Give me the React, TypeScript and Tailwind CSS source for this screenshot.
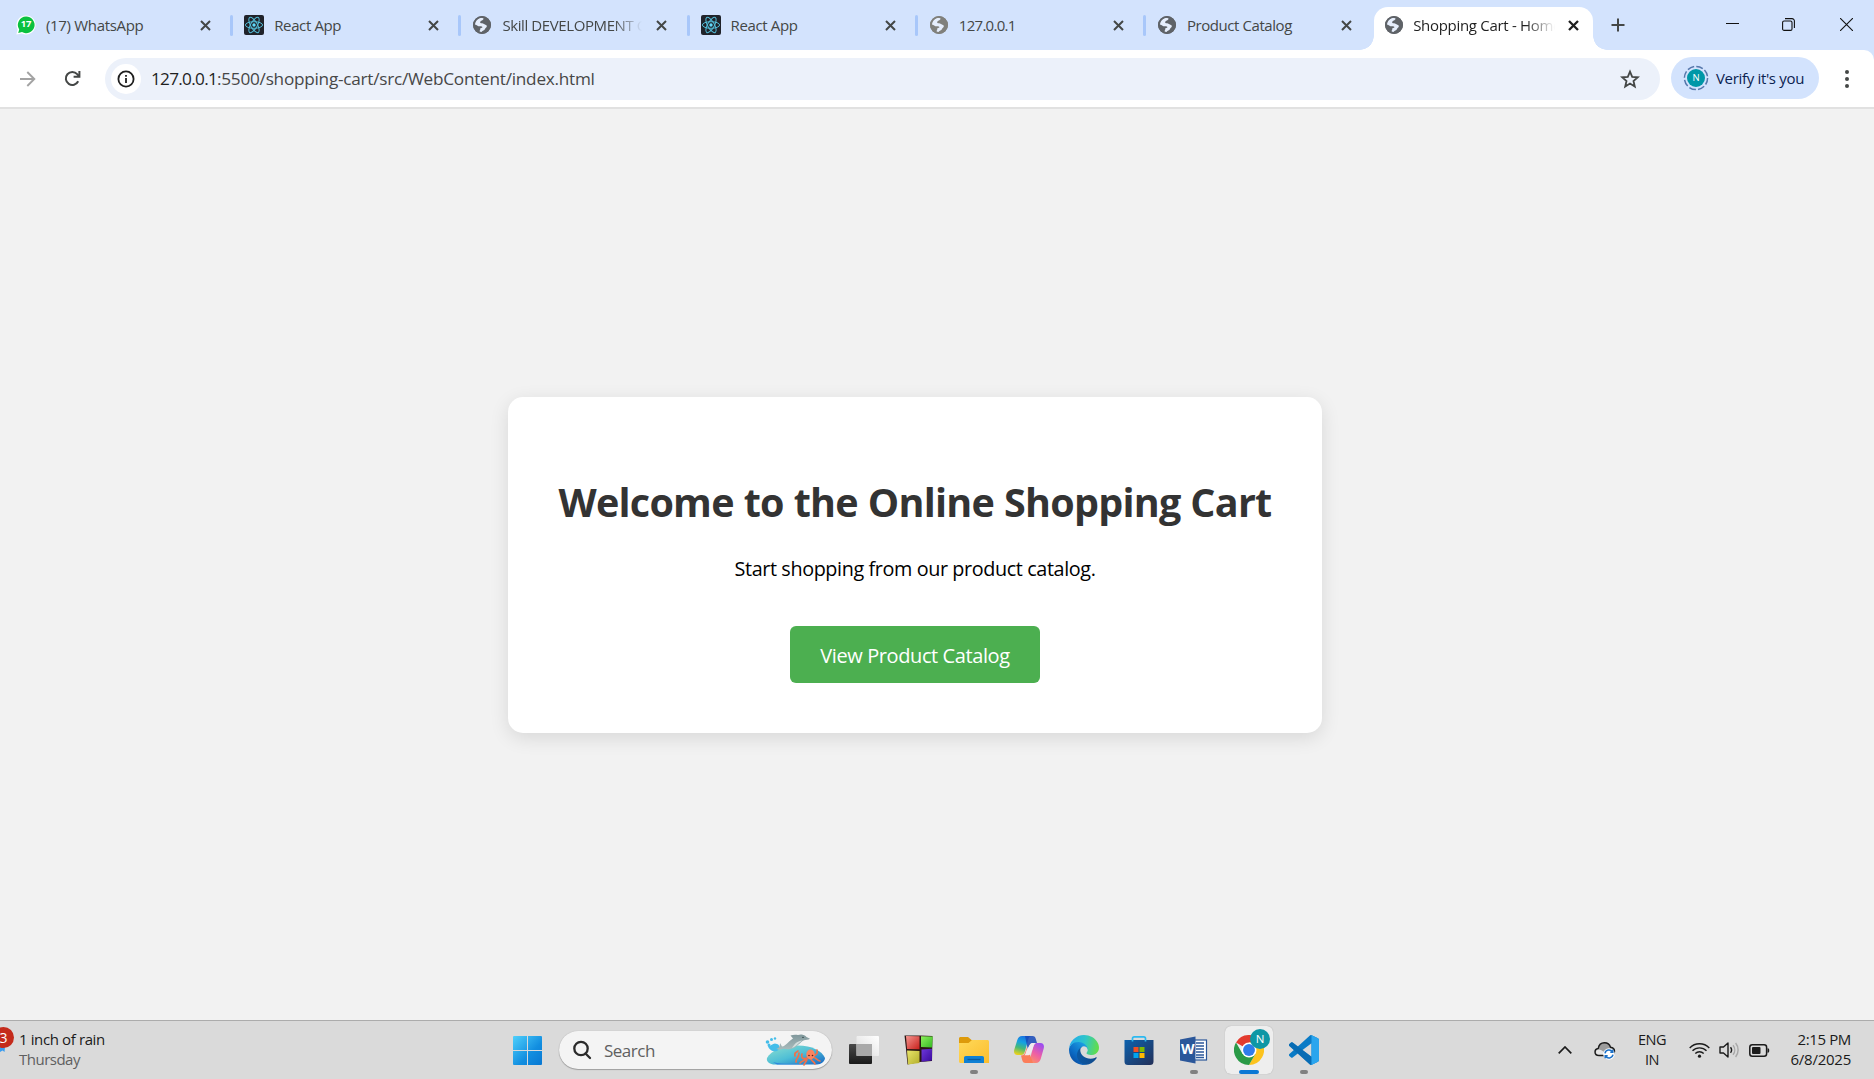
import type { ReactNode } from 'react';

const ui = "font-['Open_Sans','Noto_Sans',sans-serif]";

function Globe({ color = '#5f6368' }: { color?: string }) {
  return (
    <svg width="18" height="18" viewBox="0 0 18 18">
      <circle cx="9" cy="9" r="9" fill={color} />
      <path
        d="M1.8 8.6 C1.8 4.8 5 1.9 8.8 1.8 L10.6 2.6 C10.6 4.2 8.4 4.4 7.4 5.4 C6.6 6.4 7.4 7.3 9 7.3 C10.8 7.3 11 8.5 12.4 8.7 C14.2 9 14.2 10.5 13.200 11.4 C11.8 12.4 12 13.800 10.400 14.6 C8.800 15.300 8.600 16.300 8 16.100 L6.600 15.700 C6.200 14.600 7.600 13.900 7.200 12.900 C6.800 12 9.400 12.300 9.400 11 C9.200 10 6.800 10.500 5.400 10.200 C4.200 9.900 3.400 8.800 1.800 8.600Z"
        fill="#e6eefc"
      />
      <circle cx="9" cy="9" r="8.1" fill="none" stroke={color} strokeWidth="1.8" />
    </svg>
  );
}

function ReactLogo() {
  return (
    <svg width="20" height="20" viewBox="0 0 20 20">
      <rect width="20" height="20" rx="2" fill="#20232a" />
      <g fill="none" stroke="#53bdd8" strokeWidth="1">
        <ellipse cx="10" cy="10" rx="8.6" ry="3.3" />
        <ellipse cx="10" cy="10" rx="8.6" ry="3.3" transform="rotate(60 10 10)" />
        <ellipse cx="10" cy="10" rx="8.6" ry="3.3" transform="rotate(120 10 10)" />
      </g>
      <circle cx="10" cy="10" r="1.7" fill="#61dafb" />
    </svg>
  );
}

function WhatsAppBadge() {
  return (
    <div className="relative flex h-5 w-5 items-center justify-center">
      <svg width="20" height="20" viewBox="0 0 20 20" className="absolute inset-0">
        <path d="M10 .4a9.5 9.5 0 1 1-4.2 18L.4 19.4l1.2-5A9.5 9.5 0 0 1 10 .4Z" fill="#fff" />
        <path d="M10 1.6a8.3 8.3 0 1 1-4 15.4l-3.8 1 1-3.6A8.3 8.3 0 0 1 10 1.6Z" fill="#0bc13f" />
      </svg>
      <span className="relative -top-[1px] text-[9.5px] leading-none font-bold tracking-[-0.3px] text-white">17</span>
    </div>
  );
}

function Cross({ color = '#444746', w = 2 }: { color?: string; w?: number }) {
  return (
    <svg width="11" height="11" viewBox="0 0 11 11" className="shrink-0">
      <path d="M1 1 L10 10 M10 1 L1 10" stroke={color} strokeWidth={w} />
    </svg>
  );
}

const fade = '[mask-image:linear-gradient(to_right,black_112px,transparent_140px)]';

function Tab({ icon, title, cls, sep = true }: { icon: ReactNode; title: string; cls: string; sep?: boolean }) {
  return (
    <div className="flex h-[50px] w-[228.2px] shrink-0 items-center pl-3">
      <div className="flex w-5 shrink-0 justify-center">{icon}</div>
      <div className={`ml-[10px] w-[142px] shrink-0 overflow-hidden text-[15px] leading-5 whitespace-nowrap text-[#444746] ${cls}`}>
        {title}
      </div>
      <div className="ml-3 flex">
        <Cross />
      </div>
      {sep && <div className="-mr-[1px] ml-auto h-[21px] w-[3px] rounded-full bg-[#a8c7fa]" />}
    </div>
  );
}

function TabStrip() {
  return (
    <div className="flex h-[50px] bg-[#d3e3fd] pl-[4px]">
      <Tab icon={<WhatsAppBadge />} title="(17) WhatsApp" cls="tracking-[-0.32px]" />
      <Tab icon={<ReactLogo />} title="React App" cls="tracking-[-0.37px]" />
      <Tab icon={<Globe />} title="Skill DEVELOPMENT Course" cls={`tracking-[-0.4px] ${fade}`} />
      <Tab icon={<ReactLogo />} title="React App" cls="tracking-[-0.37px]" />
      <Tab icon={<Globe color="#80807c" />} title="127.0.0.1" cls="tracking-[-0.7px]" />
      <Tab icon={<Globe />} title="Product Catalog" cls="tracking-[-0.43px]" sep={false} />
      <div className="relative mt-[7px] ml-[1px] flex h-[43px] w-[219px] shrink-0 items-center rounded-t-[14px] bg-white pb-[7px] pl-[11px]">
        <div className="absolute bottom-0 -left-[14px] h-[14px] w-[14px] bg-[radial-gradient(circle_at_0_0,transparent_13.5px,white_14px)]" />
        <div className="absolute -right-[14px] bottom-0 h-[14px] w-[14px] bg-[radial-gradient(circle_at_100%_0,transparent_13.5px,white_14px)]" />
        <Globe />
        <div className="ml-[10px] w-[142px] shrink-0 overflow-hidden text-[15px] leading-5 tracking-[-0.3px] whitespace-nowrap text-[#1f1f1f] [mask-image:linear-gradient(to_right,black_112px,transparent_142px)]">
          Shopping Cart - Home
        </div>
        <div className="ml-[13px] flex">
          <Cross color="#1f1f1f" w={2.3} />
        </div>
      </div>
      <svg width="14" height="14" viewBox="0 0 14 14" className="mt-[18px] ml-[18px]">
        <path d="M7 .5v13M.5 7h13" stroke="#444746" strokeWidth="2" />
      </svg>
      <div className="ml-auto flex pt-[18px] pr-[21px]">
        <svg width="13" height="13" viewBox="0 0 13 13">
          <path d="M0 5.5h13" stroke="#111" />
        </svg>
        <svg width="13" height="13" viewBox="0 0 13 13" className="ml-[43px]" fill="none" stroke="#111" strokeWidth="1.1">
          <rect x=".6" y="3" width="9.4" height="9.4" rx="1.5" />
          <path d="M3 .6h7a2.4 2.4 0 0 1 2.4 2.4v7" />
        </svg>
        <svg width="13" height="13" viewBox="0 0 13 13" className="ml-[45px]">
          <path d="M0 0l13 13M13 0L0 13" stroke="#111" strokeWidth="1.1" />
        </svg>
      </div>
    </div>
  );
}

function Toolbar() {
  return (
    <div className="bg-[#d3e3fd]">
      <div className="flex h-[59px] items-start rounded-tr-[10px] border-b-2 border-[#e1e1e1] bg-white">
        <svg width="16" height="16" viewBox="0 0 16 16" className="mt-[21px] ml-5" fill="none" stroke="#a3a3a3" strokeWidth="1.9">
          <path d="M0 8h14M7.3 1l7 7-7 7" />
        </svg>
        <svg width="17" height="17" viewBox="0 0 17 17" className="mt-5 ml-7" fill="none" stroke="#444746" strokeWidth="2">
          <path d="M14.2 11.3A6.5 6.5 0 1 1 13.2 4.2L15 6" />
          <path d="M15.4 1v5.8H9.6" />
        </svg>
        <div className="mt-2 ml-6 flex h-[42px] w-[1555px] shrink-0 items-center rounded-full bg-[#ecf1fa] pl-[6px]">
          <div className="flex h-[30px] w-[30px] items-center justify-center rounded-full bg-white">
            <svg width="18" height="18" viewBox="0 0 18 18">
              <circle cx="9" cy="9" r="7.6" fill="none" stroke="#1f1f1f" strokeWidth="1.8" />
              <path d="M9 8v5M9 5v1.8" stroke="#1f1f1f" strokeWidth="1.8" />
            </svg>
          </div>
          <div className="ml-[10px] pb-px text-[17.2px] leading-6 whitespace-nowrap text-[#474747]">
            <span className="tracking-[-0.72px] text-[#1f1f1f]">127.0.0.1</span>
            <span className="tracking-[-0.25px]">:5500/shopping-cart/src/WebContent/index.html</span>
          </div>
          <svg width="20" height="20" viewBox="0 0 20 20" className="mr-5 ml-auto" fill="none" stroke="#444746" strokeWidth="1.8">
            <path d="M10 2.6l2.2 5.2 5.6.5-4.3 3.7 1.3 5.5-4.8-2.9-4.8 2.9 1.3-5.5-4.3-3.7 5.6-.5z" />
          </svg>
        </div>
        <div className="mt-[7px] ml-[11px] flex h-[42px] w-[148px] shrink-0 items-center rounded-full bg-[#d3e3fd] pl-3">
          <div className="relative flex h-[26px] w-[26px] items-center justify-center">
            <svg width="26" height="26" viewBox="0 0 26 26" className="absolute inset-0">
              <circle cx="13" cy="13" r="11.6" fill="none" stroke="#5577ab" strokeWidth="1.5" strokeDasharray="6.9 2.2" />
              <circle cx="13" cy="13" r="9" fill="#0097a7" />
            </svg>
            <span className="relative text-[9.5px] leading-none text-white">N</span>
          </div>
          <span className="ml-[7px] text-[15px] leading-5 tracking-[-0.33px] whitespace-nowrap text-[#0b2250]">Verify it's you</span>
        </div>
        <svg width="6" height="20" viewBox="0 0 6 20" className="mt-[18.5px] ml-[25px]" fill="#444746">
          <circle cx="3" cy="3" r="2" />
          <circle cx="3" cy="10" r="2" />
          <circle cx="3" cy="17" r="2" />
        </svg>
      </div>
    </div>
  );
}

function SearchArt() {
  return (
    <svg width="62" height="34" viewBox="0 0 62 34">
      <defs>
        <linearGradient id="sea" x1="0" y1="0" x2="1" y2="1">
          <stop offset="0" stopColor="#8fe0cf" />
          <stop offset=".5" stopColor="#4fbfd6" />
          <stop offset="1" stopColor="#1566c4" />
        </linearGradient>
        <linearGradient id="dolphin" x1="0" y1="0" x2="0" y2="1">
          <stop offset="0" stopColor="#7f979b" />
          <stop offset="1" stopColor="#a9bbbc" />
        </linearGradient>
      </defs>
      <path d="M2 25C6 17 19 12.500 33 12.500 47 12.500 57 18 60 25c0 3-4 6.500-8 6.500H10C5 31.500 1 29 2 25Z" fill="url(#sea)" />
      <path d="M8 29c10 3 25 1 34 2.500H12z" fill="#2f86dd" />
      <g fill="#45bde9">
        <path d="M3 13c4 0 5-4 9-2 4 1 2 6 0 7-4 1-8-1-9-5Z" />
        <circle cx="2.500" cy="9" r="1.800" />
        <circle cx="6.500" cy="6.500" r="1.500" />
        <circle cx="10" cy="5.500" r="1.200" />
        <circle cx="4" cy="12" r="1.500" />
      </g>
      <path
        d="M11 16c3-.5 4-3 4-6l2 3.500C21 13 23 8.500 28 5.500L25.500 2.500c3-1 5.500-.8 7.500-.500C36 .8 40 1.500 41.500 4l3.500 1.800c-1.500 1.300-4 1-6 1.500-4 2-6 6-11 8-4 1.500-7 1-9.500.5-2 .5-4.500 1-7.500.2Z"
        fill="url(#dolphin)"
      />
      <path d="M38 7.500c-4 1-6 6-11 7.500 2-3 4-7 11-7.500Z" fill="#d3dedd" />
      <circle cx="38" cy="4.400" r=".7" fill="#26383c" />
      <g fill="none" stroke="#f0704a" strokeWidth="1.700" strokeLinecap="round">
        <path d="M42 25c-5 2-6-1-5-4M42 25c-3 4-5 2-7 5M42 26c-1 4-2 3-3 6M46 26c1 3 3 2 4 5M47 24c4 0 5 4 8 4M47 23c4-1 6-2 5-6M33 18c-2 2-4 1-3 5M34 20c0 5-3 5-3 9" />
      </g>
      <ellipse cx="45.500" cy="21.500" rx="4.200" ry="5" fill="#fb8560" />
      <circle cx="44" cy="22.500" r=".8" fill="#5a1d12" />
      <circle cx="47.500" cy="22.500" r=".8" fill="#5a1d12" />
    </svg>
  );
}

function TaskbarApp({ children, run, active }: { children: ReactNode; run?: boolean; active?: boolean }) {
  return (
    <div className="flex h-[58px] w-[55px] flex-col items-center pt-[5px]">
      <div
        className={
          active
            ? 'flex h-12 w-12 flex-col items-center rounded-[6px] bg-[#eeeeee] pt-[9px] shadow-[0_0_1px_rgba(0,0,0,0.3)]'
            : 'flex h-12 w-12 flex-col items-center pt-[9px]'
        }
      >
        <div className="h-[30px] w-[30px]">{children}</div>
        {run && !active && <div className="mt-[5px] h-1 w-2 rounded-full bg-[#808080]" />}
        {active && <div className="mt-[5px] h-1 w-5 rounded-full bg-[#0b78d4]" />}
      </div>
    </div>
  );
}

function TaskView() {
  return (
    <svg width="30" height="30" viewBox="0 0 30 30">
      <defs>
        <linearGradient id="tv1" x1="0" y1="0" x2="0" y2="1">
          <stop offset="0" stopColor="#4a4a4a" />
          <stop offset="1" stopColor="#1a1a1a" />
        </linearGradient>
        <linearGradient id="tv2" x1="1" y1="0" x2="0" y2="1">
          <stop offset="0" stopColor="#ffffff" />
          <stop offset="1" stopColor="#dcdcdc" />
        </linearGradient>
      </defs>
      <rect y="9" width="23" height="20" rx="1" fill="url(#tv1)" />
      <rect x="7.500" y="1" width="22.500" height="20" rx="1" fill="url(#tv2)" />
      <rect x="7.500" y="9" width="15.500" height="12" fill="#a9a9a9" />
    </svg>
  );
}

function Blocks() {
  return (
    <svg width="30" height="30" viewBox="0 0 30 30">
      <defs>
        <linearGradient id="bl1" x1="0" y1="0" x2="1" y2="1">
          <stop offset="0" stopColor="#f5958f" />
          <stop offset="1" stopColor="#c8201c" />
        </linearGradient>
        <linearGradient id="bl2" x1="0" y1="0" x2="1" y2="1">
          <stop offset="0" stopColor="#8df05c" />
          <stop offset="1" stopColor="#33b723" />
        </linearGradient>
        <linearGradient id="bl3" x1="0" y1="0" x2="1" y2="1">
          <stop offset="0" stopColor="#e8e56a" />
          <stop offset="1" stopColor="#b3ae2a" />
        </linearGradient>
        <linearGradient id="bl4" x1="0" y1="0" x2="1" y2="1">
          <stop offset="0" stopColor="#6e38dc" />
          <stop offset="1" stopColor="#3a0a9b" />
        </linearGradient>
      </defs>
      <path d="M.5.500 16 .500 28.500 1l-.5 25-12.500 1L3.500 29.500 2 14Z" fill="#2b1613" />
      <path d="M2 1l13.500.200v13L3 14Z" fill="url(#bl1)" />
      <path d="M17 1.300 28.800 1.500 28 12.500 17 12Z" fill="url(#bl2)" />
      <path d="M3 15.500l12.500.500V28L4 29.500Z" fill="url(#bl3)" />
      <path d="M17.500 14.500 28 13.700V25.500l-10.500 1.200Z" fill="url(#bl4)" />
    </svg>
  );
}

function Folder() {
  return (
    <svg width="30" height="30" viewBox="0 0 30 30">
      <defs>
        <linearGradient id="fo" x1="0" y1="0" x2="1" y2="1">
          <stop offset="0" stopColor="#ffd95a" />
          <stop offset="1" stopColor="#fbbd2c" />
        </linearGradient>
      </defs>
      <path d="M0 3.500C0 2.700.7 2 1.500 2H9l3.500 3H20v6H0Z" fill="#dd9a0b" />
      <path d="M0 8h9.500L13 5h15.500c.8 0 1.500.7 1.500 1.500V28H1.500C.7 28 0 27.300 0 26.500Z" fill="url(#fo)" />
      <path d="M5 28v-5.200c0-1 .8-1.800 1.800-1.800h16.400c1 0 1.800.8 1.800 1.800V28Z" fill="#0f80d4" />
      <path d="M8.500 24.500h13" stroke="#0a5a9e" strokeWidth="1.300" />
    </svg>
  );
}

function Copilot() {
  return (
    <svg width="30" height="30" viewBox="0 0 30 30">
      <defs>
        <linearGradient id="co1" x1=".6" y1="0" x2=".3" y2="1">
          <stop offset="0" stopColor="#1b6fe0" />
          <stop offset=".35" stopColor="#14a2e2" />
          <stop offset=".65" stopColor="#45b978" />
          <stop offset="1" stopColor="#e9d11c" />
        </linearGradient>
        <linearGradient id="co2" x1=".8" y1="0" x2=".2" y2="1">
          <stop offset="0" stopColor="#9a4df2" />
          <stop offset=".5" stopColor="#ee5fa4" />
          <stop offset="1" stopColor="#ff9a5c" />
        </linearGradient>
      </defs>
      <path d="M19 1h-1.500c-1.500 0-2.500 1-3 2.500L11 16c-.7 2.400-1.700 4-4 4H3.500C.5 20-.5 17.500.3 14.500L3.300 5C4.200 2.400 5.700 1 8 1Z" fill="url(#co1)" />
      <path d="M11 1h7.500c2 0 2.800 1.300 3.300 3L23 8h-4c-2.500 0-3.300 1.500-4 4l-1 3.500Z" fill="#1649b8" opacity=".85" />
      <path d="M11 28h1.500c1.500 0 2.500-1 3-2.500L19 13c.7-2.500 1.700-5 4-5h3.500c3 0 4 2.500 3.200 5.500L26.700 24c-.9 2.600-2.400 4-4.700 4Z" fill="url(#co2)" />
      <path d="M19 28h-7.500c-2 0-2.800-1.300-3.300-3L7 20.500c2.500 0 3.800-1.500 4.500-4L13 12c-.3 4 3 8 3 8Z" fill="#fb7d5a" />
      <path d="M15.800 9.800C16.500 8.500 17.500 8 19 8h2c-1 1.500-1.500 3-2 5l-2.500 6c-.7 1-1.500 1.200-3 1.200H10.500c1-1 1.400-2.700 2-5Z" fill="#f1e9ee" />
    </svg>
  );
}

function Edge() {
  return (
    <svg width="30" height="30" viewBox="0 0 256 256">
      <defs>
        <linearGradient id="ed1" x1="63" y1="177" x2="241" y2="177" gradientUnits="userSpaceOnUse">
          <stop offset="0" stopColor="#0c59a4" />
          <stop offset="1" stopColor="#114a8b" />
        </linearGradient>
        <linearGradient id="ed2" x1="157" y1="100" x2="46" y2="222" gradientUnits="userSpaceOnUse">
          <stop offset="0" stopColor="#1b9de2" />
          <stop offset=".7" stopColor="#0b6ac4" />
          <stop offset="1" stopColor="#0a55ab" />
        </linearGradient>
        <linearGradient id="ed3" x1="20" y1="60" x2="240" y2="110" gradientUnits="userSpaceOnUse">
          <stop offset="0" stopColor="#25aee8" />
          <stop offset=".5" stopColor="#2fc6c9" />
          <stop offset="1" stopColor="#5fdc50" />
        </linearGradient>
      </defs>
      <path fill="url(#ed1)" d="M231 190.500c-3.400 1.800-6.900 3.400-10.500 4.700a101.900 101.900 0 0 1-35.900 6.400c-47.300 0-88.500-32.500-88.500-74.300a31.500 31.500 0 0 1 16.400-27.300c-42.800 1.800-53.800 46.400-53.800 72.500 0 74 68.100 81.400 82.800 81.400 7.900 0 19.800-2.300 27-4.600l1.300-.4a128.300 128.300 0 0 0 66.600-52.800 4 4 0 0 0-5.400-5.600z" />
      <path fill="url(#ed2)" d="M105.700 241.400a79.200 79.200 0 0 1-22.700-21.300 80.700 80.700 0 0 1 29.500-120c3.200-1.500 8.500-4.100 15.600-4a32.400 32.400 0 0 1 25.700 13 31.900 31.900 0 0 1 6.300 18.700c0-.2 24.500-79.600-80-79.600-43.900 0-80 41.600-80 78.200a130.200 130.200 0 0 0 12.100 56 128 128 0 0 0 156.400 67 75.500 75.500 0 0 1-62.800-8z" />
      <path fill="url(#ed3)" d="M152.300 148.900c-.9 1-3.400 2.500-3.400 5.600 0 2.600 1.700 5.200 4.800 7.300 14.300 10 41.400 8.600 41.500 8.600a59.600 59.600 0 0 0 30.300-8.300 61.400 61.400 0 0 0 30.400-52.900c.3-22.400-8-37.300-11.300-43.900C223.500 23.900 177.700 0 128 0a128 128 0 0 0-128 126.200c.5-36.500 36.800-66 80-66 3.500 0 23.500.3 42 10.100 16.300 8.600 24.900 19 30.900 29.200 6.200 10.700 7.300 24.100 7.300 29.500 0 5.300-2.700 13.300-7.800 19.900z" />
    </svg>
  );
}

function Store() {
  return (
    <svg width="30" height="30" viewBox="0 0 30 30">
      <defs>
        <linearGradient id="st" x1="0" y1="0" x2="1" y2="1">
          <stop offset="0" stopColor="#0d62ae" />
          <stop offset="1" stopColor="#232f58" />
        </linearGradient>
      </defs>
      <path d="M.5 5h29v21.500a3.500 3.500 0 0 1-3.500 3.500H4a3.500 3.500 0 0 1-3.500-3.500Z" fill="url(#st)" />
      <path d="M8.500 6.500v-3c0-1 .6-1.700 1.700-1.700h9.600c1 0 1.700.6 1.700 1.700v3" fill="none" stroke="#2cb9f0" strokeWidth="1.700" />
      <rect x="9.500" y="12" width="5" height="5" fill="#f25022" />
      <rect x="15.500" y="12" width="5" height="5" fill="#7fba00" />
      <rect x="9.500" y="18" width="5" height="5" fill="#00a4ef" />
      <rect x="15.500" y="18" width="5" height="5" fill="#ffb900" />
    </svg>
  );
}

function Word() {
  return (
    <div className="relative h-[30px] w-[30px]">
      <svg width="30" height="30" viewBox="0 0 30 30">
        <rect x="15" y="5" width="12.500" height="20" fill="#fff" stroke="#2b579a" strokeWidth="1.200" />
        <path d="M17 8h8M17 11h8M17 14h8M17 17h8M17 20h8M17 22.500h8" stroke="#2b579a" strokeWidth="1.300" />
        <path d="M1 4.500 16.500 1.500v27L1 25.500Z" fill="#2b579a" />
      </svg>
      <span className="absolute top-[6px] left-[2px] text-[14px] leading-4 font-bold text-white">W</span>
    </div>
  );
}

function Chrome() {
  return (
    <div className="relative h-[30px] w-[30px]">
      <svg width="30" height="30" viewBox="0 0 48 48">
        <path d="M24 24 3.200 12A24 24 0 0 1 44.800 12H24Z" fill="#e33b2e" />
        <path d="M44.800 12A24 24 0 0 1 24 48L34.400 30 24 12Z" fill="#fcc31e" />
        <path d="M3.200 12A24 24 0 0 0 24 48l10.400-18H13.600Z" fill="#2a9a47" />
        <circle cx="24" cy="24" r="12" fill="#fff" />
        <circle cx="24" cy="24" r="9.500" fill="#2f7ceb" />
      </svg>
      <div className="absolute -top-[6px] -right-[6px] flex h-5 w-5 items-center justify-center rounded-full bg-[#0e97a5] text-[11.5px] leading-none text-white">
        N
      </div>
    </div>
  );
}

function VSCode() {
  return (
    <svg width="30" height="30" viewBox="0 0 24 24">
      <path
        d="M23.150 2.587L18.210.210a1.494 1.494 0 0 0-1.705.290l-9.460 8.630-4.120-3.128a.999.999 0 0 0-1.276.057L.327 7.261A1 1 0 0 0 .326 8.740L3.899 12 .326 15.260a1 1 0 0 0 .001 1.479L1.650 17.940a.999.999 0 0 0 1.276.057l4.120-3.128 9.460 8.630a1.492 1.492 0 0 0 1.704.290l4.942-2.377A1.500 1.500 0 0 0 24 20.060V3.939a1.500 1.500 0 0 0-.850-1.352zm-5.146 14.861L10.826 12l7.178-5.448v10.896z"
        fill="#0a7bc6"
      />
      <path d="M.327 7.261 1.650 6.060a1 1 0 0 1 1.276-.057L18 17.448V23.600a1.500 1.500 0 0 1-1.500-.200L.326 8.740a1 1 0 0 1 0-1.479Z" fill="#0867ad" opacity=".75" />
      <path d="M18 .100 23.150 2.587A1.500 1.500 0 0 1 24 3.939V20.060a1.500 1.500 0 0 1-.850 1.350L18 23.900Z" fill="#2aa5ee" />
    </svg>
  );
}

function Taskbar() {
  return (
    <div className="flex h-[59px] border-t border-[#acacac] bg-[#dadada] text-[15px] leading-5 text-[#1b1b1b]">
      <div className="relative flex w-[504px] shrink-0 flex-col justify-center pb-[2px] pl-[19px]">
        <svg width="6" height="6" viewBox="0 0 6 6" className="absolute top-[26px] left-0">
          <path d="M0 0h5l-.5 5L2.500 3.500 0 5Z" fill="#3a9df0" />
        </svg>
        <div className="absolute top-[6px] -left-[7px] flex h-[21px] w-[21px] items-center justify-center rounded-full bg-[#c42b1c] text-[14px] leading-none text-white">
          3
        </div>
        <span className="tracking-[-0.38px]">1 inch of rain</span>
        <span className="tracking-[-0.5px] text-[#5f5f5f]">Thursday</span>
      </div>
      <svg width="29" height="29" viewBox="0 0 29 29" className="mt-[15px] ml-[9px] shrink-0">
        <defs>
          <linearGradient id="win" x1="0" y1="0" x2="29" y2="29" gradientUnits="userSpaceOnUse">
            <stop offset="0" stopColor="#4fd0fb" />
            <stop offset=".6" stopColor="#128ee0" />
            <stop offset="1" stopColor="#0877d2" />
          </linearGradient>
        </defs>
        <path d="M1 0h13v14H0V1a1 1 0 0 1 1-1ZM15 0h13a1 1 0 0 1 1 1v13H15ZM0 15h14v14H1a1 1 0 0 1-1-1ZM15 15h14v13a1 1 0 0 1-1 1H15Z" fill="url(#win)" />
      </svg>
      <div className="mt-[10px] ml-[17px] flex h-[38px] w-[273px] shrink-0 items-center rounded-full bg-[#f4f4f4] pl-[13px] shadow-[0_1px_1px_rgba(0,0,0,0.25),0_0_1px_rgba(0,0,0,0.25)]">
        <svg width="20" height="20" viewBox="0 0 20 20" fill="none" stroke="#2b2b2b" strokeWidth="2.300" strokeLinecap="round">
          <circle cx="9" cy="8.500" r="6.700" />
          <path d="M13.500 13.500l4.500 4.500" />
        </svg>
        <span className="ml-3 pt-[2px] text-[17px] leading-6 tracking-[-0.5px] text-[#606060]">Search</span>
        <div className="mr-[5px] ml-auto">
          <SearchArt />
        </div>
      </div>
      <div className="ml-[4.500px] flex">
        <TaskbarApp><TaskView /></TaskbarApp>
        <TaskbarApp><Blocks /></TaskbarApp>
        <TaskbarApp run><Folder /></TaskbarApp>
        <TaskbarApp><Copilot /></TaskbarApp>
        <TaskbarApp><Edge /></TaskbarApp>
        <TaskbarApp><Store /></TaskbarApp>
        <TaskbarApp run><Word /></TaskbarApp>
        <TaskbarApp active><Chrome /></TaskbarApp>
        <TaskbarApp run><VSCode /></TaskbarApp>
      </div>
      <div className="ml-auto flex h-[58px] items-center pr-[23px]">
        <svg width="14" height="8" viewBox="0 0 14 8" fill="none" stroke="#1b1b1b" strokeWidth="1.700">
          <path d="M.7 7.300 7 1l6.300 6.300" />
        </svg>
        <svg width="22" height="19" viewBox="0 0 22 19" className="ml-[22px]">
          <path d="M5 14.500C2.500 14.500 1 13 1 11s1.500-3.300 3.200-3.500C4.800 4 7.300 1.800 10.500 1.800c3 0 5.200 1.700 6 4.400 2.500.2 4 1.800 4 4.100 0 2.500-1.500 4.200-4 4.200Z" fill="#9c9c9c" stroke="#1b1b1b" strokeWidth="1.400" />
          <path d="M4.500 13.500C2.800 13.500 2 12.300 2 11c0-1.500 1.200-2.700 3-2.500 2 .2 6 2.500 7 5Z" fill="#e6e6e6" />
          <circle cx="15" cy="13" r="5.800" fill="#fff" />
          <g fill="none" stroke="#1a70c8" strokeWidth="1.500">
            <path d="M11 12.300A4.100 4.100 0 0 1 18.500 11M19 13.700A4.100 4.100 0 0 1 11.500 15" />
            <path d="M18.800 8.800v2.500h-2.500M11.200 17.200v-2.500h2.500" />
          </g>
        </svg>
        <div className="ml-[21px] flex w-[30px] flex-col items-center text-[14.500px] tracking-[-0.5px]">
          <span>ENG</span>
          <span>IN</span>
        </div>
        <svg width="21" height="17" viewBox="0 0 21 17" className="ml-[22px]" fill="none" stroke="#1b1b1b" strokeWidth="1.400">
          <path d="M.7 6A13.500 13.500 0 0 1 20.300 6M3.500 8.800a9.800 9.800 0 0 1 14 0M6.300 11.500a6 6 0 0 1 8.400 0" />
          <circle cx="10.500" cy="14.200" r="1.600" fill="#1b1b1b" stroke="none" />
        </svg>
        <svg width="21" height="18" viewBox="0 0 21 18" className="ml-[9px]" fill="none" strokeWidth="1.400">
          <path d="M1 6h3.500L9 2v14l-4.500-4H1Z" stroke="#1b1b1b" strokeLinejoin="round" />
          <path d="M11.500 6.200a4.500 4.500 0 0 1 0 5.600" stroke="#1b1b1b" />
          <path d="M14 4.200a7.500 7.500 0 0 1 0 9.600M16.600 2a11 11 0 0 1 0 14" stroke="#a8a8a8" />
        </svg>
        <svg width="21" height="13" viewBox="0 0 21 13" className="ml-[9px]">
          <rect x=".8" y=".8" width="16.800" height="11.400" rx="2.500" fill="none" stroke="#1b1b1b" strokeWidth="1.500" />
          <rect x="3" y="3" width="8.500" height="7" rx="1" fill="#1b1b1b" />
          <path d="M18.500 4.300c1 0 1.700.7 1.700 1.500v1.400c0 .8-.7 1.500-1.700 1.500Z" fill="#1b1b1b" />
        </svg>
        <div className="flex w-[81px] flex-col items-end pb-[2px] whitespace-nowrap">
          <span className="tracking-[-0.37px]">2:15 PM</span>
          <span className="tracking-[-0.25px]">6/8/2025</span>
        </div>
      </div>
    </div>
  );
}

export default function App() {
  return (
    <div className={`flex h-[1079px] w-[1874px] flex-col overflow-hidden ${ui}`}>
      <TabStrip />
      <Toolbar />
      <main className="flex h-[911px] items-center justify-center bg-[#f2f2f2] pr-[44px]">
        <div className="flex h-[336px] w-[814px] flex-col items-center rounded-[15px] bg-white pt-[78px] shadow-[0_5px_19px_rgba(0,0,0,0.11)]">
          <h1 className="text-[39.5px] leading-[54px] font-bold tracking-[-0.75px] whitespace-nowrap text-[#333333] [word-spacing:0.4px]">
            Welcome to the Online Shopping Cart
          </h1>
          <p className="mt-[26px] text-[19.8px] leading-7 tracking-[-0.39px] text-black">Start shopping from our product catalog.</p>
          <button className="mt-[43px] flex h-[57px] w-[250px] items-center justify-center rounded-[6px] bg-[#4caf50] pt-[3px] text-[20px] leading-7 tracking-[-0.4px] text-white">
            View Product Catalog
          </button>
        </div>
      </main>
      <Taskbar />
    </div>
  );
}
